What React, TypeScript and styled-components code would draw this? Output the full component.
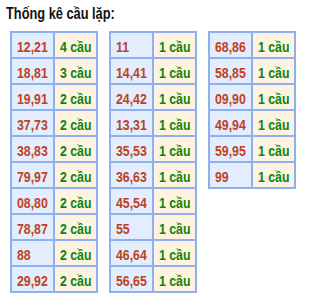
import React from "react";
import styled, { createGlobalStyle } from "styled-components";

const Global = createGlobalStyle`
  html, body { margin: 0; padding: 0; background: #ffffff; }
  body { font-family: "Liberation Sans", Arial, sans-serif; }
`;

const Page = styled.div`
  padding: 5px 0 0 6px;
`;

const Title = styled.h3`
  margin: 0;
  font-weight: bold;
  font-size: 16px;
  line-height: 18px;
  color: #111;
`;

const Narrow = styled.span<{ $scale: number }>`
  display: inline-block;
  white-space: nowrap;
  transform: scaleX(${(p) => p.$scale});
  transform-origin: left center;
`;

const Tables = styled.div`
  display: flex;
  align-items: flex-start;
  gap: 11px;
  margin: 8px 0 0 4px;
`;

const Table = styled.div`
  display: grid;
  grid-template-columns: 43px 43px;
  border: 1px solid #8fb0f0;
`;

const Cell = styled.div<{ $kind: "num" | "count" }>`
  box-sizing: border-box;
  height: 26px;
  border: 1px solid #8fb0f0;
  display: flex;
  align-items: center;
  padding: 2px 0 0 5px;
  overflow: hidden;
  font-weight: bold;
  font-size: 15px;
  background: ${(p) => (p.$kind === "num" ? "#e2edfd" : "#fef3e1")};
  color: ${(p) => (p.$kind === "num" ? "#c0411f" : "#0b850b")};
`;

const data: [string, string][][] = [
  [
    ["12,21", "4 cầu"],
    ["18,81", "3 cầu"],
    ["19,91", "2 cầu"],
    ["37,73", "2 cầu"],
    ["38,83", "2 cầu"],
    ["79,97", "2 cầu"],
    ["08,80", "2 cầu"],
    ["78,87", "2 cầu"],
    ["88", "2 cầu"],
    ["29,92", "2 cầu"],
  ],
  [
    ["11", "1 cầu"],
    ["14,41", "1 cầu"],
    ["24,42", "1 cầu"],
    ["13,31", "1 cầu"],
    ["35,53", "1 cầu"],
    ["36,63", "1 cầu"],
    ["45,54", "1 cầu"],
    ["55", "1 cầu"],
    ["46,64", "1 cầu"],
    ["56,65", "1 cầu"],
  ],
  [
    ["68,86", "1 cầu"],
    ["58,85", "1 cầu"],
    ["09,90", "1 cầu"],
    ["49,94", "1 cầu"],
    ["59,95", "1 cầu"],
    ["99", "1 cầu"],
  ],
];

export default function App() {
  return (
    <Page>
      <Global />
      <Title>
        <Narrow $scale={0.8}>Thống kê cầu lặp:</Narrow>
      </Title>
      <Tables>
        {data.map((rows, i) => (
          <Table key={i}>
            {rows.map(([n, c]) => (
              <React.Fragment key={n}>
                <Cell $kind="num">
                  <Narrow $scale={0.82}>{n}</Narrow>
                </Cell>
                <Cell $kind="count">
                  <Narrow $scale={0.82}>{c}</Narrow>
                </Cell>
              </React.Fragment>
            ))}
          </Table>
        ))}
      </Tables>
    </Page>
  );
}
